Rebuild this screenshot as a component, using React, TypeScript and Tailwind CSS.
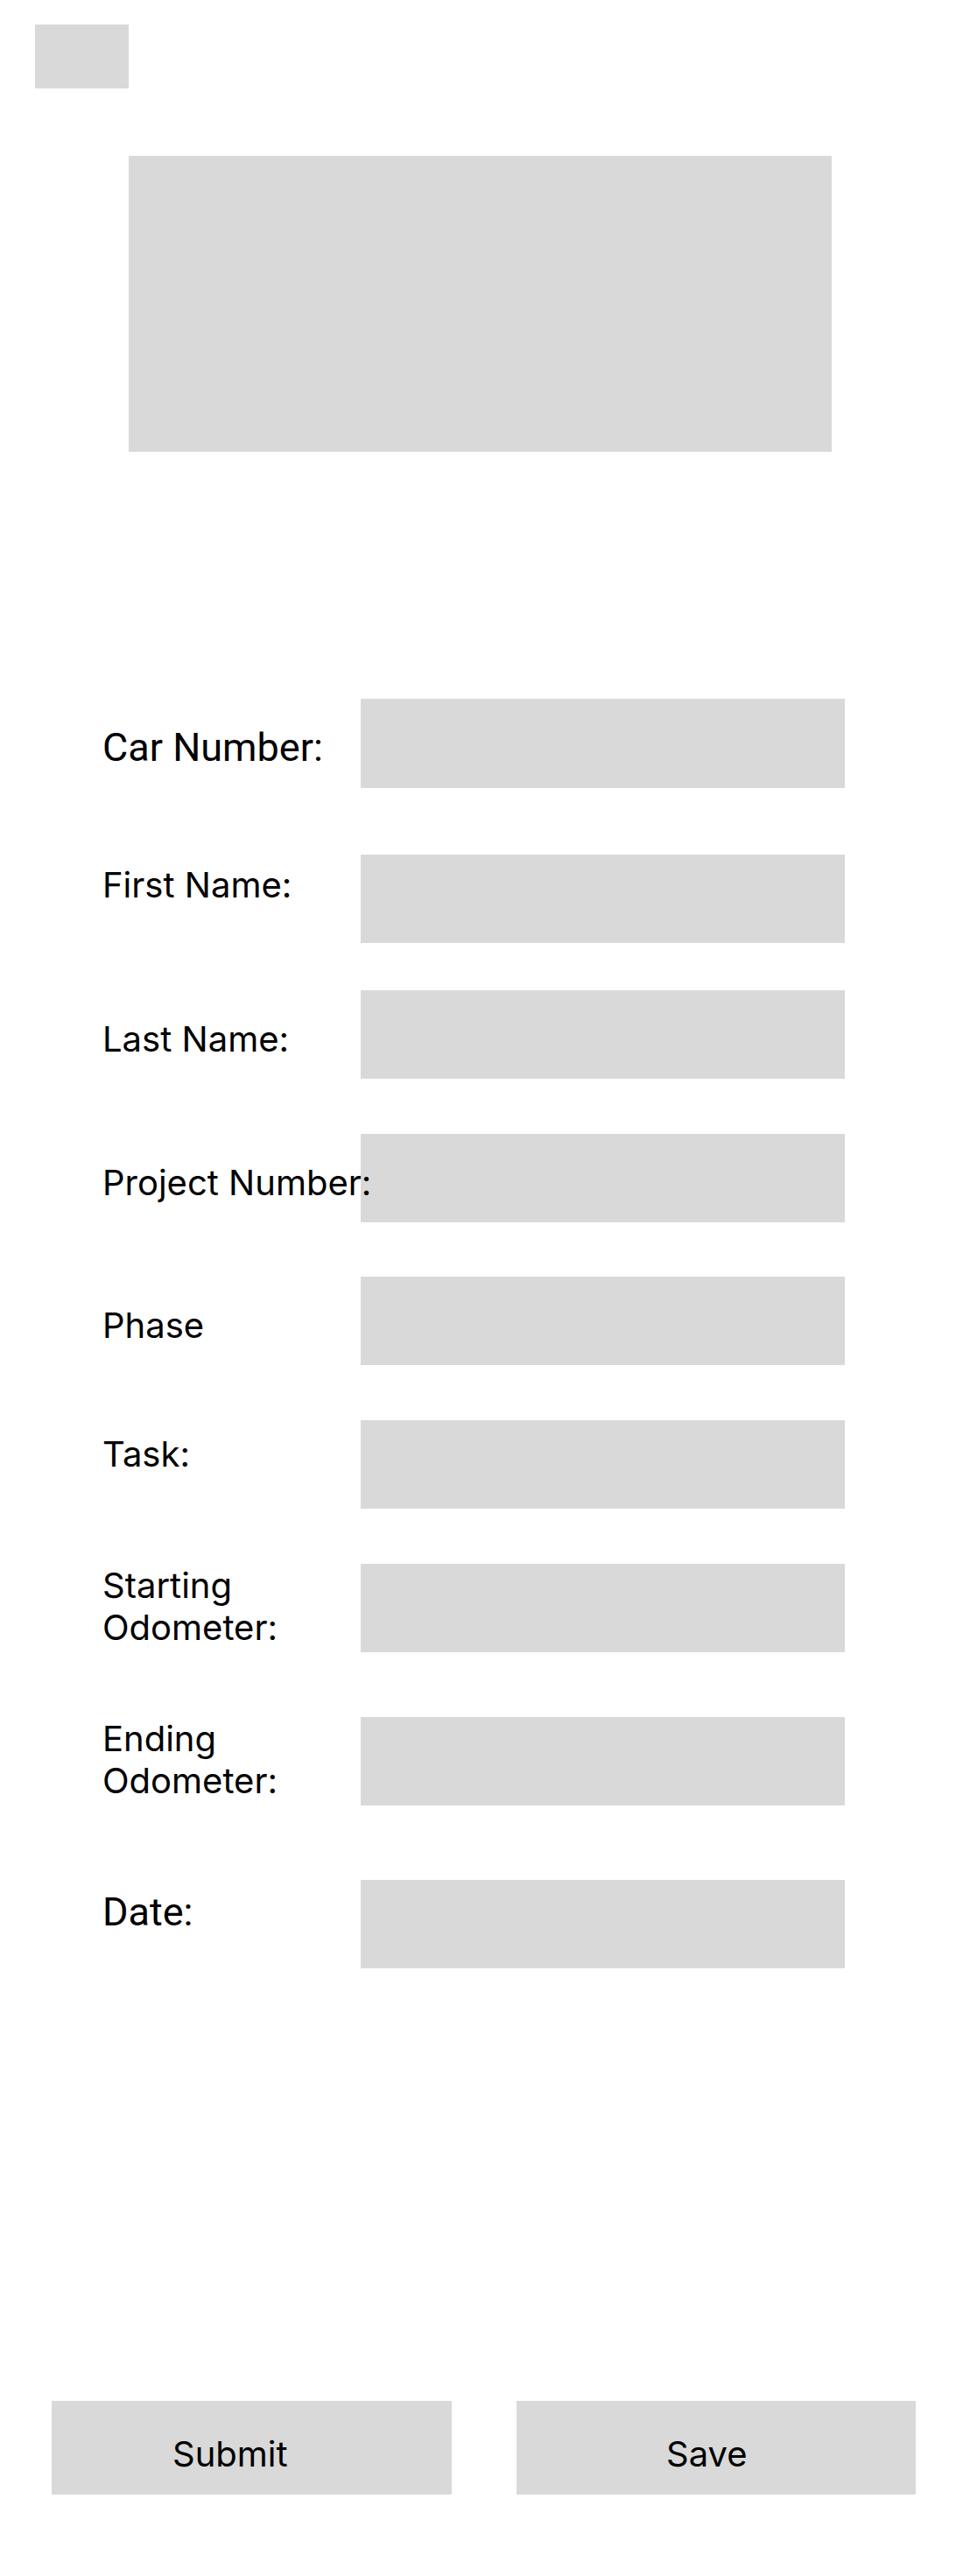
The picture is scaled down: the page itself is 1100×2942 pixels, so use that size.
import React from "react";

type Row = {
  label: React.ReactNode;
  rowClass: string;
  labelClass: string;
  inputClass: string;
};

const inter = "font-[Inter,sans-serif] text-[40px] leading-[48px]";
const roboto = "font-[Roboto,sans-serif] text-[45px] leading-[48px]";

const rows: Row[] = [
  {
    label: "Car Number:",
    rowClass: "mt-[282px]",
    labelClass: `mt-[32px] ${roboto}`,
    inputClass: "h-[102px]",
  },
  {
    label: "First Name:",
    rowClass: "mt-[76px]",
    labelClass: `mt-[11px] ${inter}`,
    inputClass: "h-[101px]",
  },
  {
    label: "Last Name:",
    rowClass: "mt-[54px]",
    labelClass: `mt-[32px] ${inter}`,
    inputClass: "h-[101px]",
  },
  {
    label: "Project Number:",
    rowClass: "mt-[63px]",
    labelClass: `mt-[32px] ${inter}`,
    inputClass: "h-[101px]",
  },
  {
    label: "Phase",
    rowClass: "mt-[62px]",
    labelClass: `mt-[32px] ${inter}`,
    inputClass: "h-[101px]",
  },
  {
    label: "Task:",
    rowClass: "mt-[63px]",
    labelClass: `mt-[15px] ${inter}`,
    inputClass: "h-[101px]",
  },
  {
    label: (
      <>
        Starting
        <br />
        Odometer:
      </>
    ),
    rowClass: "mt-[63px]",
    labelClass: `mt-[1px] ${inter}`,
    inputClass: "h-[101px]",
  },
  {
    label: (
      <>
        Ending
        <br />
        Odometer:
      </>
    ),
    rowClass: "mt-[74px]",
    labelClass: `mt-[1px] ${inter}`,
    inputClass: "h-[101px]",
  },
  {
    label: "Date:",
    rowClass: "mt-[85px]",
    labelClass: `mt-[13px] ${roboto}`,
    inputClass: "h-[101px]",
  },
];

export default function App() {
  return (
    <div className="w-[1100px] min-h-[2942px] bg-white text-black flex flex-col">
      <div className="pt-[28px] pl-[40px]">
        <div className="w-[107px] h-[73px] bg-[#d9d9d9]" />
      </div>
      <div className="mt-[77px] pl-[147px]">
        <div className="w-[803px] h-[338px] bg-[#d9d9d9]" />
      </div>

      <form className="flex flex-col pl-[117px]">
        {rows.map((r, i) => (
          <div key={i} className={`flex items-start ${r.rowClass}`}>
            <label className={`relative z-10 w-[295px] shrink-0 whitespace-nowrap ${r.labelClass}`}>
              {r.label}
            </label>
            <div className={`w-[553px] bg-[#d9d9d9] ${r.inputClass}`} />
          </div>
        ))}
      </form>

      <div className="mt-[494px] flex pl-[59px] gap-[74px]">
        <button
          type="button"
          className="w-[457px] h-[107px] bg-[#d9d9d9] text-left pt-[37px] pl-[138px] self-start flex items-start font-[Inter,sans-serif] text-[40px] leading-[48px] text-black"
        >
          Submit
        </button>
        <button
          type="button"
          className="w-[456px] h-[107px] bg-[#d9d9d9] text-left pt-[37px] pl-[171px] self-start flex items-start font-[Inter,sans-serif] text-[40px] leading-[48px] text-black"
        >
          Save
        </button>
      </div>
    </div>
  );
}
